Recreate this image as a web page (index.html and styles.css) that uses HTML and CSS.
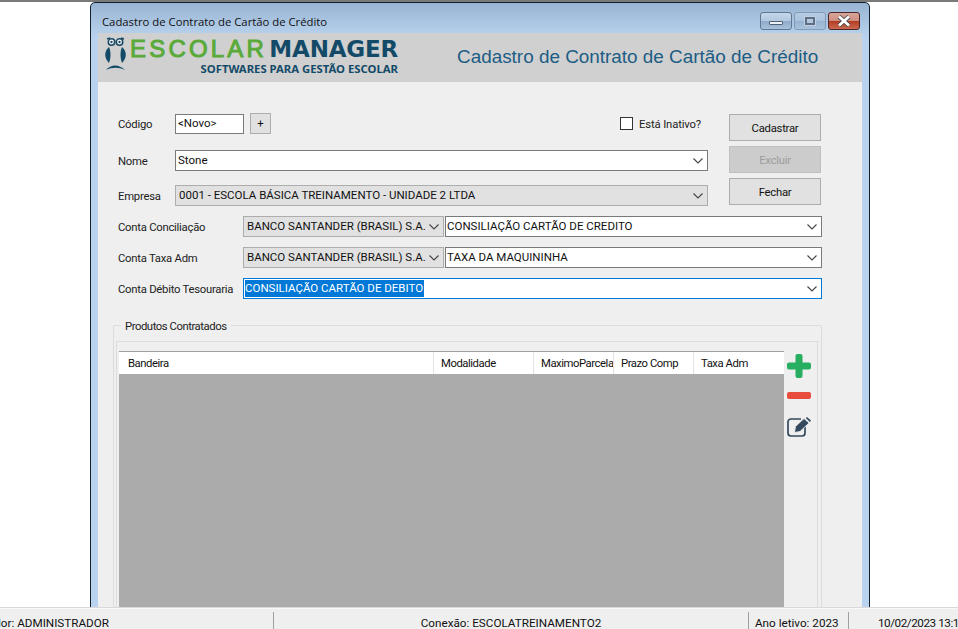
FILE: index.html
```html
<!DOCTYPE html>
<html lang="pt-BR">
<head>
    <meta charset="UTF-8">
    <title>Cadastro de Contrato de Cartão de Crédito</title>
    <link rel="stylesheet" href="styles.css">
</head>
<body>

    <svg class="defs" width="0" height="0">
        <symbol id="chev" viewBox="0 0 10 6">
            <path d="M0.5 0.5 L5 5 L9.5 0.5" fill="none" stroke="#444" stroke-width="1.1"/>
        </symbol>
    </svg>

    <div class="desktop">
        <div class="window">

            <div class="titlebar">
                <span class="title-text">Cadastro de Contrato de Cartão de Crédito</span>
                <div class="win-buttons">
                    <div class="win-btn"><span class="glyph-min"></span></div>
                    <div class="win-btn win-btn-dim"><span class="glyph-max"></span></div>
                    <div class="win-btn win-btn-close">
                        <svg width="16" height="12" viewBox="0 0 16 12">
                            <path d="M3 1.5 L13 10.5 M13 1.5 L3 10.5" stroke="#4a4a4a" stroke-width="4.4"/>
                            <path d="M3 1.5 L13 10.5 M13 1.5 L3 10.5" stroke="#fff" stroke-width="2.8"/>
                        </svg>
                    </div>
                </div>
            </div>

            <div class="client">
                <!-- Logo and form title -->
                <div class="banner">
                    <div class="logo">
                        <svg class="owl" width="24" height="36" viewBox="0 0 24 36">
                            <circle cx="7.5" cy="5" r="3.2" fill="#fff" stroke="#1d4a63" stroke-width="1.6"/>
                            <circle cx="15.5" cy="5" r="3.2" fill="#fff" stroke="#1d4a63" stroke-width="1.6"/>
                            <circle cx="7.5" cy="5" r="1.2" fill="#1d4a63"/>
                            <circle cx="15.5" cy="5" r="1.2" fill="#1d4a63"/>
                            <path d="M3 2 L6 1 M20 2 L17 1" stroke="#1d4a63" stroke-width="1.4"/>
                            <path d="M5 10 C0 14 0 21 5 26 C7 21 7 14 5 10 Z" fill="#134a68"/>
                            <path d="M18 10 C23 14 23 21 18 26 C16 21 16 14 18 10 Z" fill="#134a68"/>
                            <path d="M2 33 C7 27 15 27 21 33 C15 30 8 30 2 33 Z" fill="#134a68"/>
                        </svg>
                        <div class="logo-text">
                            <div class="logo-name"><span class="logo-green">ESCOLAR</span><span class="logo-blue">MANAGER</span></div>
                            <div class="logo-sub">SOFTWARES PARA GESTÃO ESCOLAR</div>
                        </div>
                    </div>
                    <h1 class="form-title">Cadastro de Contrato de Cartão de Crédito</h1>
                </div>

                <div class="form">
                    <div class="form-top">
                        <div class="form-left">
                            <div class="row row-codigo">
                                <label class="lbl lbl-short">Código</label>
                                <div class="field field-code">&lt;Novo&gt;</div>
                                <button class="btn-plus">+</button>
                                <div class="check">
                                    <span class="check-box"></span>
                                    <span class="check-text">Está Inativo?</span>
                                </div>
                            </div>
                            <div class="row row-nome">
                                <label class="lbl lbl-short">Nome</label>
                                <div class="field field-grow">
                                    <span>Stone</span>
                                    <svg class="chev"><use href="#chev"/></svg>
                                </div>
                            </div>
                            <div class="row row-empresa">
                                <label class="lbl lbl-short">Empresa</label>
                                <div class="field field-grow field-gray">
                                    <span>0001 - ESCOLA BÁSICA TREINAMENTO - UNIDADE 2 LTDA</span>
                                    <svg class="chev"><use href="#chev"/></svg>
                                </div>
                            </div>
                        </div>
                        <div class="actions">
                            <button class="btn">Cadastrar</button>
                            <button class="btn btn-disabled">Excluir</button>
                            <button class="btn">Fechar</button>
                        </div>
                    </div>

                    <div class="row row-conta">
                        <label class="lbl lbl-long">Conta Conciliação</label>
                        <div class="field field-bank field-gray">
                            <span>BANCO SANTANDER (BRASIL) S.A.</span>
                            <svg class="chev"><use href="#chev"/></svg>
                        </div>
                        <div class="field field-grow">
                            <span>CONSILIAÇÃO CARTÃO DE CREDITO</span>
                            <svg class="chev"><use href="#chev"/></svg>
                        </div>
                    </div>
                    <div class="row row-conta">
                        <label class="lbl lbl-long">Conta Taxa Adm</label>
                        <div class="field field-bank field-gray">
                            <span>BANCO SANTANDER (BRASIL) S.A.</span>
                            <svg class="chev"><use href="#chev"/></svg>
                        </div>
                        <div class="field field-grow">
                            <span>TAXA DA MAQUININHA</span>
                            <svg class="chev"><use href="#chev"/></svg>
                        </div>
                    </div>
                    <div class="row row-conta">
                        <label class="lbl lbl-long">Conta Débito Tesouraria</label>
                        <div class="field field-grow field-focus">
                            <span class="selected">CONSILIAÇÃO CARTÃO DE DEBITO</span>
                            <svg class="chev"><use href="#chev"/></svg>
                        </div>
                    </div>

                    <!-- Produtos Contratados -->
                    <div class="group">
                        <span class="group-title">Produtos Contratados</span>
                        <div class="panel">
                            <div class="grid">
                                <div class="grid-head">
                                    <div class="col col-bandeira">Bandeira</div>
                                    <div class="col col-modalidade">Modalidade</div>
                                    <div class="col col-num">MaximoParcela</div>
                                    <div class="col col-num">Prazo Comp</div>
                                    <div class="col col-num col-last">Taxa Adm</div>
                                </div>
                            </div>
                            <div class="tools">
                                <svg width="24" height="24" viewBox="0 0 24 24">
                                    <path d="M8.5 2 a2 2 0 0 1 2-2 h3 a2 2 0 0 1 2 2 V8.5 H22 a2 2 0 0 1 2 2 v3 a2 2 0 0 1-2 2 H15.5 V22 a2 2 0 0 1-2 2 h-3 a2 2 0 0 1-2-2 V15.5 H2 a2 2 0 0 1-2-2 v-3 a2 2 0 0 1 2-2 H8.5 Z" fill="#27ae60"/>
                                </svg>
                                <svg class="tool-minus" width="24" height="7" viewBox="0 0 24 7">
                                    <rect x="0" y="0" width="24" height="7" rx="2" fill="#e74c3c"/>
                                </svg>
                                <svg class="tool-edit" width="24" height="20" viewBox="0 0 24 20">
                                    <path d="M14 2 H4 a3 3 0 0 0-3 3 V16 a3 3 0 0 0 3 3 H15 a3 3 0 0 0 3-3 V10" fill="none" stroke="#34495e" stroke-width="1.7"/>
                                    <path d="M8.5 9.5 L17 1.5 L22 6 L13 14.5 L7.5 15.5 Z" fill="#34495e" stroke="#efefef" stroke-width="0.8"/>
                                    <path d="M18.8 1 L20 0 L24 3.4 L22.8 5 Z" fill="#34495e"/>
                                </svg>
                            </div>
                        </div>
                    </div>
                </div>
            </div>
        </div>
    </div>

    <footer class="statusbar">
        <div class="status-cell status-user"><span class="status-user-text">Operador: ADMINISTRADOR</span></div>
        <div class="status-cell status-conn">Conexão: ESCOLATREINAMENTO2</div>
        <div class="status-cell status-year">Ano letivo: 2023</div>
        <div class="status-cell status-date">10/02/2023 13:1</div>
    </footer>

</body>
</html>
```

FILE: styles.css
```css
/* General Page Styling */
html, body {
    height: 100%;
}

body {
    margin: 0;
    background: #ffffff;
    color: #1a1a1a;
    font-family: Roboto, 'Liberation Sans', sans-serif;
    font-size: 11.3px;
    overflow: hidden;
    display: flex;
    flex-direction: column;
}

.defs {
    position: absolute;
}

/* Desktop and window frame */
.desktop {
    height: 607px;
    flex: none;
    overflow: hidden;
    border-top: 2px solid #7a7a7a;
    box-sizing: border-box;
}

.window {
    width: 780px;
    height: 660px;
    margin-left: 90px;
    box-sizing: border-box;
    border: 1px solid #10202c;
    border-radius: 5px 5px 0 0;
    background: linear-gradient(180deg, #98b4d2 0, #b9d3ee 34px, #b9d3ee 100%);
    padding: 0 7px;
}

.titlebar {
    height: 30px;
    display: flex;
    align-items: flex-start;
    justify-content: space-between;
}

.title-text {
    margin: 11px 0 0 4px;
    font-family: 'Open Sans', sans-serif;
    font-size: 11.3px;
    line-height: 16px;
    color: #111111;
}

.win-buttons {
    display: flex;
    gap: 2px;
    margin: 9px 2px 0 0;
}

.win-btn {
    width: 32px;
    height: 18px;
    box-sizing: border-box;
    border: 1px solid #5f7994;
    border-radius: 3px;
    background: linear-gradient(180deg, #c4d6ea 0, #b3c9e0 48%, #8fabc8 52%, #a7c1dc 100%);
    display: flex;
    align-items: center;
    justify-content: center;
}

.win-btn-dim {
    border-color: #819ab5;
    background: linear-gradient(180deg, #b7cde4 0, #aac2dc 48%, #98b3d0 52%, #a9c3de 100%);
}

.win-btn-close {
    border-color: #4d2428;
    background: linear-gradient(180deg, #d9a69b 0, #cf8f80 48%, #b53c22 52%, #c96a50 100%);
}

.glyph-min {
    width: 14px;
    height: 4px;
    margin-top: 4px;
    box-sizing: border-box;
    background: #eef2f6;
    border: 1px solid #4f6072;
    border-radius: 1px;
}

.glyph-max {
    width: 10px;
    height: 8px;
    box-sizing: border-box;
    border: 2px solid #5d7086;
    outline: 1px solid #c0d0e2;
    background: #b4c8dc;
}

/* Client area */
.client {
    height: 640px;
    background: #efefef;
}

.banner {
    height: 49px;
    background: #d0d0d0;
    display: flex;
    align-items: flex-start;
}

.logo {
    display: flex;
    margin: 4px 0 0 6px;
}

.owl {
    flex: none;
}

.logo-text {
    margin-left: 2px;
    width: 268px;
}

.logo-name {
    display: flex;
    justify-content: space-between;
    font-family: 'DejaVu Sans', sans-serif;
    font-weight: bold;
    line-height: 24px;
    height: 24px;
}

.logo-green {
    color: #5aaa3a;
    font-family: 'Liberation Sans', sans-serif;
    font-weight: normal;
    font-size: 24px;
    letter-spacing: 3.2px;
    -webkit-text-stroke: 1px #5aaa3a;
}

.logo-blue {
    color: #134a68;
    font-size: 23px;
    letter-spacing: -0.2px;
}

.logo-sub {
    margin-top: 1px;
    text-align: right;
    font-family: 'Noto Sans', sans-serif;
    font-weight: bold;
    font-size: 11.3px;
    line-height: 14px;
    color: #134a68;
}

.form-title {
    margin: 12px 0 0 59px;
    font-family: 'Liberation Sans', sans-serif;
    font-size: 18.9px;
    font-weight: normal;
    line-height: 24px;
    color: #1c5d85;
    white-space: nowrap;
}

/* Form rows */
.form {
    padding: 30px 40px 0 20px;
}

.form-top {
    display: flex;
    justify-content: space-between;
}

.form-left {
    width: 590px;
}

.row {
    display: flex;
    align-items: center;
}

.row-codigo {
    height: 21px;
    margin-top: 1px;
}

.row-nome {
    margin-top: 16px;
    height: 21px;
}

.row-empresa {
    margin-top: 14px;
    height: 21px;
}

.row-conta {
    margin-top: 10px;
    height: 21px;
}

.lbl {
    flex: none;
    color: #222222;
    padding-top: 2px;
    white-space: nowrap;
    letter-spacing: -0.25px;
}

.lbl-short {
    width: 57px;
}

.lbl-long {
    width: 125px;
}

.field {
    height: 21px;
    box-sizing: border-box;
    border: 1px solid #7a7a7a;
    background: #ffffff;
    padding: 0 2px;
    font-size: 11.5px;
    line-height: 17px;
    display: flex;
    align-items: center;
    justify-content: space-between;
    white-space: nowrap;
    color: #111111;
}

.field-code {
    width: 69px;
    height: 20px;
}

.field-grow {
    flex: 1;
}

.field-gray {
    background: #e1e1e1;
    border-color: #adadad;
    padding-left: 3px;
}

.field-bank {
    flex: none;
    width: 201px;
    margin-right: 1px;
}

.field-bank + .field {
    padding-left: 1px;
}

.field-focus {
    border-color: #0078d7;
    padding-left: 1px;
}

.selected {
    background: #0078d7;
    color: #ffffff;
    padding-right: 1px;
}

.chev {
    flex: none;
    width: 10px;
    height: 6px;
    margin: 1px 2px 0 0;
}

/* Buttons */
.btn-plus {
    width: 21px;
    height: 21px;
    margin-left: 6px;
    padding: 0;
    border: 1px solid #adadad;
    background: #e1e1e1;
    font: inherit;
    color: #111111;
}

.check {
    margin-left: auto;
    margin-right: 7px;
    display: flex;
    align-items: center;
    gap: 6px;
    color: #222222;
}

.check-box {
    width: 13px;
    height: 13px;
    box-sizing: border-box;
    border: 1px solid #333333;
    background: #ffffff;
}

.check-text {
    padding-top: 1px;
    letter-spacing: -0.15px;
}

.actions {
    display: flex;
    flex-direction: column;
    gap: 5px;
    margin: 2px 1px 0 0;
}

.btn {
    width: 92px;
    height: 27px;
    padding: 2px 0 0;
    border: 1px solid #adadad;
    background: #e1e1e1;
    font: inherit;
    letter-spacing: -0.25px;
    color: #111111;
}

.btn-disabled {
    background: #cccccc;
    border-color: #bfbfbf;
    color: #9c9c9c;
}

/* Produtos Contratados group */
.group {
    position: relative;
    margin: 26px 0 0 -5px;
    border: 1px solid #dcdcdc;
    border-radius: 2px;
    padding: 15px 3px 0 2px;
}

.group-title {
    position: absolute;
    top: -6px;
    left: 7px;
    padding: 0 4px;
    background: #efefef;
    color: #222222;
    line-height: 14px;
    letter-spacing: -0.45px;
}

.panel {
    display: flex;
    align-items: flex-start;
    border: 1px solid #dcdcdc;
    padding: 9px 0 0 2px;
}

.grid {
    width: 665px;
    height: 300px;
    background: #ababab;
    flex: none;
}

.grid-head {
    height: 23px;
    box-sizing: border-box;
    border-top: 1px solid #a0a0a0;
    background: #ffffff;
    display: flex;
    color: #111111;
    letter-spacing: -0.45px;
}

.col {
    box-sizing: border-box;
    padding: 5px 0 0 7px;
    border-right: 1px solid #e3e3e3;
    white-space: nowrap;
    overflow: hidden;
}

.col-bandeira {
    width: 315px;
    padding-left: 9px;
}

.col-modalidade {
    width: 100px;
}

.col-num {
    width: 80px;
}

.col-last {
    width: 90px;
    border-right: 0;
}

.tools {
    display: flex;
    flex-direction: column;
    margin: 3px 0 0 3px;
}

.tool-minus {
    margin-top: 14px;
}

.tool-edit {
    margin-top: 18px;
}

/* Status bar */
.statusbar {
    flex: 1;
    display: flex;
    background: #efefef;
    box-sizing: border-box;
    border-top: 1px solid #d8d8d8;
    box-shadow: inset 0 1px 0 #f8f8f8;
    padding-top: 4px;
    font-size: 11.7px;
    color: #111111;
    overflow: hidden;
    white-space: nowrap;
}

.status-cell {
    box-sizing: border-box;
    border-right: 1px solid #a0a0a0;
    line-height: 15px;
    padding-top: 4px;
    min-width: 0;
}

.status-user {
    flex: 0 0 274px;
    display: flex;
    justify-content: flex-end;
    padding-right: 164px;
}

.status-user-text {
    flex: none;
}

.status-conn {
    flex: 0 0 475px;
    text-align: center;
}

.status-year {
    flex: 0 0 100px;
    padding-left: 6px;
}

.status-date {
    flex: 1;
    border-right: 0;
    padding-left: 29px;
    letter-spacing: -0.45px;
}
```
